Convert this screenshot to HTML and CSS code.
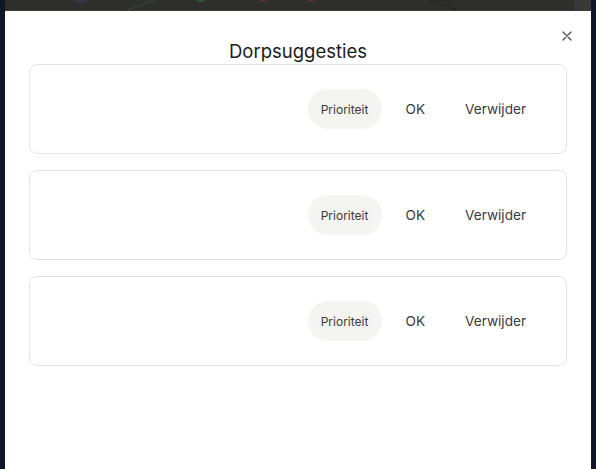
FILE: index.html
```html
<!DOCTYPE html>
<html lang="nl">
<head>
<meta charset="utf-8">
<title>Dorpsuggesties</title>
<link rel="stylesheet" href="styles.css">
</head>
<body>
<div class="backdrop">
  <svg class="backdrop-art" width="586" height="11" viewBox="0 0 586 11">
    <line x1="120" y1="11" x2="155" y2="-2" stroke="#3d4a3a" stroke-width="1"/>
    <line x1="420" y1="-2" x2="455" y2="11" stroke="#1e2420" stroke-width="1"/>
    <circle cx="76" cy="-6" r="8" fill="none" stroke="#3b3a55" stroke-width="2"/>
    <circle cx="196" cy="-5" r="6" fill="none" stroke="#2f5a32" stroke-width="2"/>
    <circle cx="258" cy="-5" r="6" fill="none" stroke="#5a2f3c" stroke-width="2"/>
    <circle cx="306" cy="-5" r="6" fill="none" stroke="#5a2f3c" stroke-width="2"/>
  </svg>
  <div class="scroll-thumb"></div>
</div>
<div class="modal">
  <button class="close" aria-label="Sluiten">
    <svg width="10" height="10" viewBox="0 0 10 10"><path d="M1 1L9 9M9 1L1 9" stroke="#555" stroke-width="1.4" stroke-linecap="round"/></svg>
  </button>
  <h2 class="title">Dorpsuggesties</h2>
  <div class="list">
    <div class="card">
      <button class="btn pill">Prioriteit</button>
      <button class="btn ok">OK</button>
      <button class="btn del">Verwijder</button>
    </div>
    <div class="card">
      <button class="btn pill">Prioriteit</button>
      <button class="btn ok">OK</button>
      <button class="btn del">Verwijder</button>
    </div>
    <div class="card">
      <button class="btn pill">Prioriteit</button>
      <button class="btn ok">OK</button>
      <button class="btn del">Verwijder</button>
    </div>
  </div>
</div>
</body>
</html>
```
FILE: styles.css
```css
* { box-sizing: border-box; }
html, body {
  margin: 0;
  height: 469px;
  overflow: hidden;
}
body {
  background: #0f1628;
  font-family: Inter, "Noto Sans", sans-serif;
  padding: 0 5px;
}
.backdrop {
  position: relative;
  height: 11px;
  background: #2e2f2b;
  border-bottom: 1px solid #3a3b37;
  overflow: hidden;
}
.backdrop-art {
  position: absolute;
  left: 0;
  top: 0;
}
.scroll-thumb {
  position: absolute;
  right: 0;
  top: 0;
  width: 17px;
  height: 11px;
  background: #383936;
}
.modal {
  position: relative;
  background: #fff;
  height: 470px;
  padding: 29px 24px 24px;
}
.close {
  position: absolute;
  top: 20px;
  right: 19px;
  border: 0;
  background: none;
  padding: 0;
  width: 10px;
  height: 10px;
  display: flex;
  cursor: pointer;
}
.title {
  margin: 0 0 2px;
  text-align: center;
  font-size: 18.5px;
  line-height: 22px;
  font-weight: 400;
  color: #1b1b1b;
}
.list {
  display: flex;
  flex-direction: column;
  gap: 16px;
}
.card {
  display: flex;
  justify-content: flex-end;
  align-items: center;
  gap: 12px;
  padding: 24px;
  border: 1px solid #e3e3e3;
  border-radius: 8px;
  height: 90px;
}
.btn {
  font-family: inherit;
  border: 0;
  background: none;
  height: 40px;
  color: #3a3a3a;
  font-size: 13.6px;
  padding: 0 16px;
  border-radius: 20px;
  cursor: pointer;
}
.pill {
  background: #f4f4f2;
  font-size: 12px;
  padding: 0 11px;
  width: 74px;
}
.ok {
  padding: 0 12px;
}
.del {
  padding: 0 16px;
}
```
